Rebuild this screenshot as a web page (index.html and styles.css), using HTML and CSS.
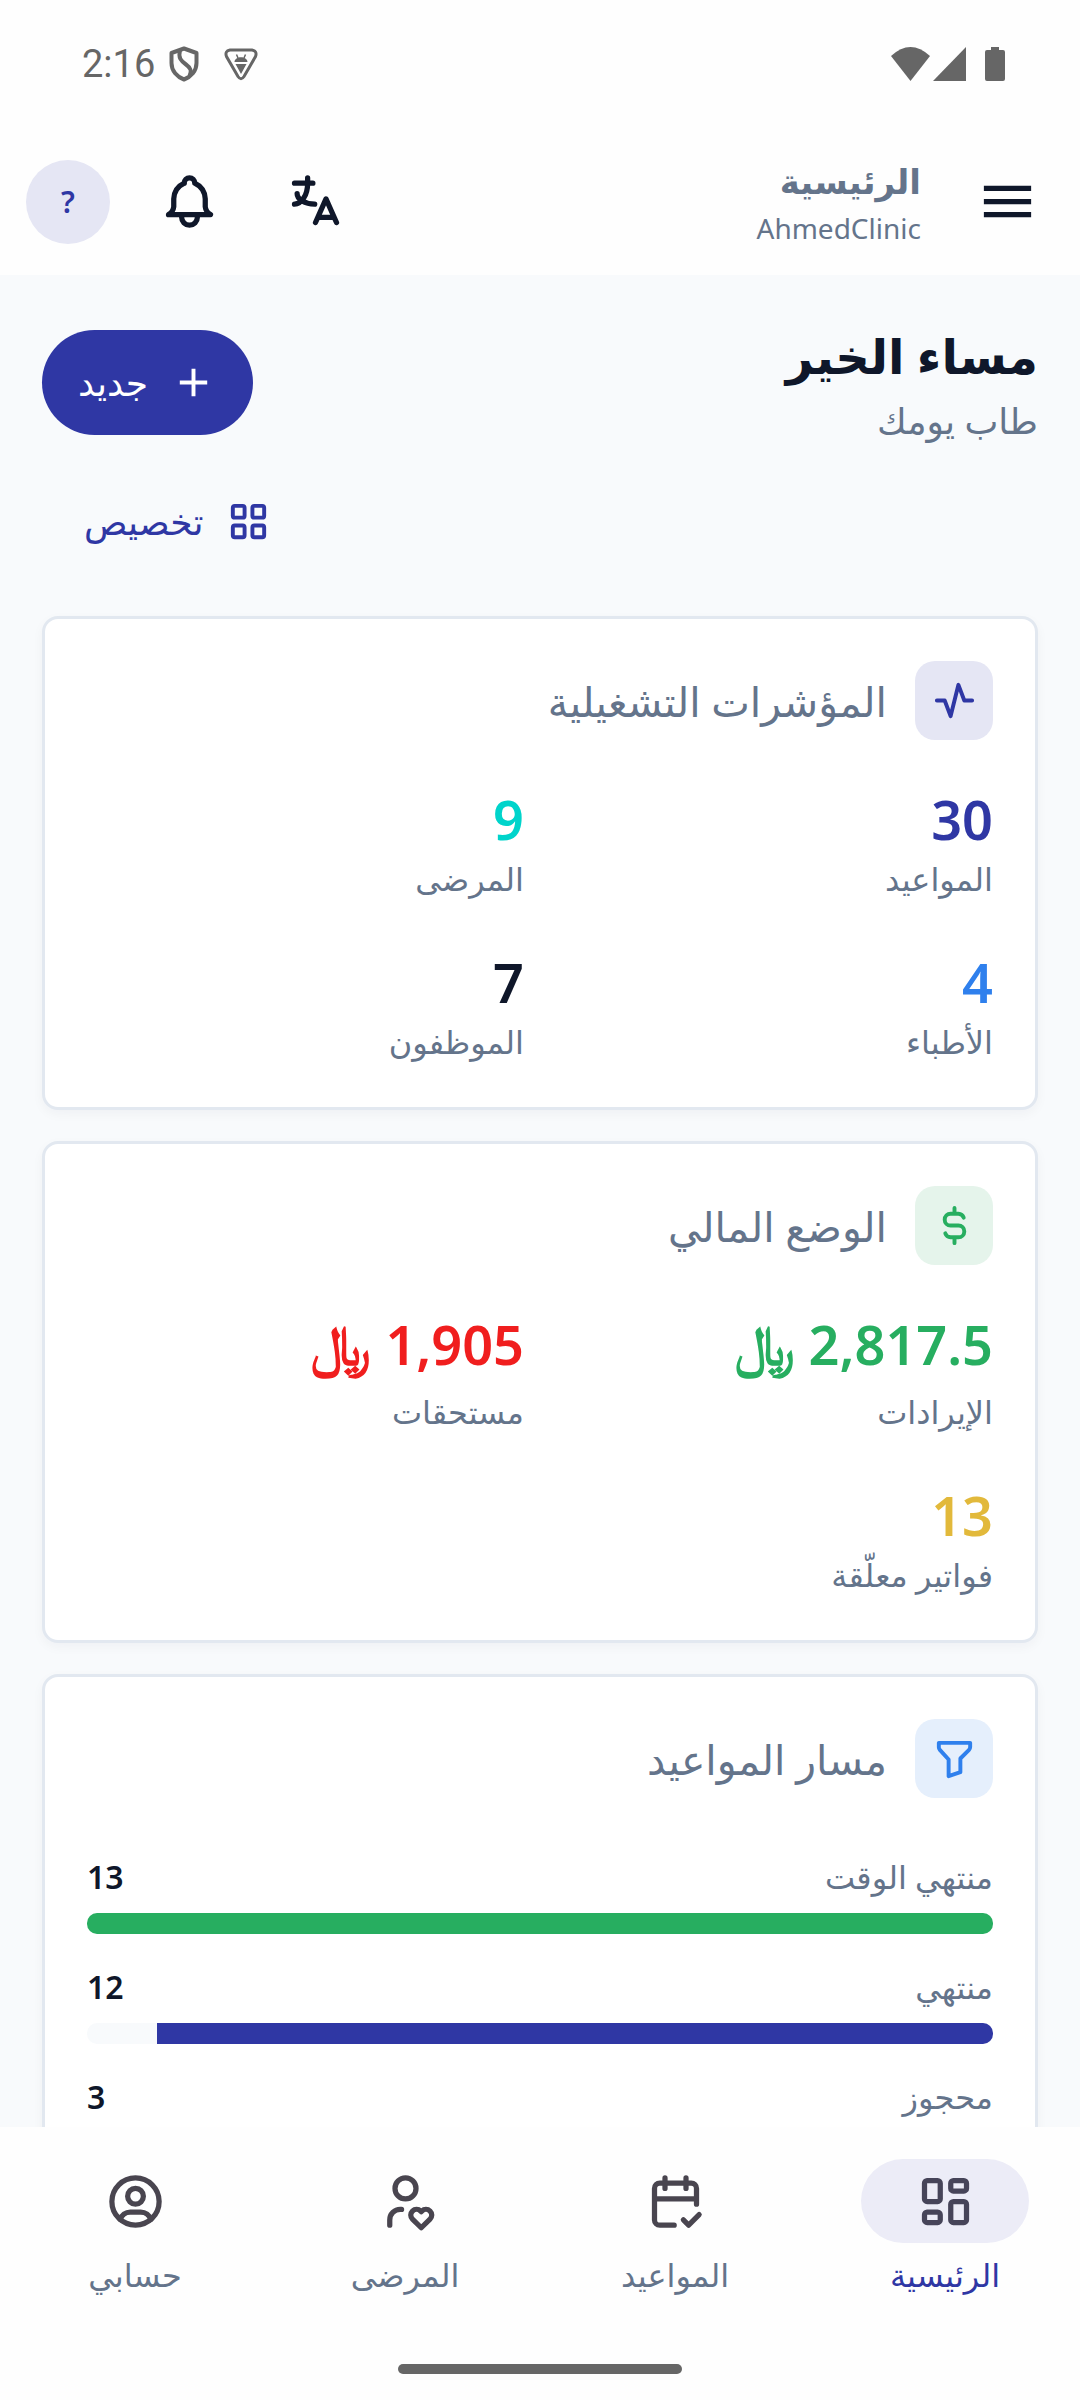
FILE: index.html
```html
<!DOCTYPE html>
<html lang="ar" dir="rtl">
<head>
    <meta charset="UTF-8">
    <meta name="viewport" content="width=device-width, initial-scale=1.0">
    <title>الرئيسية - AhmedClinic</title>
    <link rel="stylesheet" href="styles.css">
</head>
<body>
    <div class="status-bar" dir="ltr">
        <div class="status-left">
            <span class="clock">2:16</span>
            <svg class="status-shield" viewBox="0 0 30 36" fill="none" stroke="currentColor" stroke-width="4" stroke-linejoin="round">
                <path d="M15 2.500L27.500 7V17C27.500 25 22 31 15 33.500C8 31 2.500 25 2.500 17V7Z"/>
                <path d="M11 4C9 12 12 15 17 18.500C22 22 23 25 20.500 30"/>
            </svg>
            <svg class="status-debug" viewBox="0 0 34 33">
                <path d="M6 2H28Q33.500 3 31.500 8.500L20 28.500Q17 33 14 28.500L2.500 8.500Q0.500 3 6 2Z" fill="none" stroke="currentColor" stroke-width="3"/>
                <path d="M10.500 14C10.500 7.500 23.500 7.500 23.500 14ZM11.500 16H22.500L17 26Z" fill="currentColor"/>
                <path d="M12.500 6.500L14 10M21.500 6.500L20 10" stroke="currentColor" stroke-width="1.500"/>
            </svg>
        </div>
        <div class="status-right">
            <svg class="status-wifi" viewBox="0 0 39 34" fill="currentColor"><path d="M0 9Q19.500 -9 39 9L19.500 34Z"/></svg>
            <svg class="status-signal" viewBox="0 0 33 34" fill="currentColor"><path d="M33 0V34H0Z"/></svg>
            <svg class="status-battery" viewBox="0 0 20 34" fill="currentColor"><path d="M6 0H14V3H18Q20 3 20 5V32Q20 34 18 34H2Q0 34 0 32V5Q0 3 2 3H6Z"/></svg>
        </div>
    </div>

    <header class="app-bar">
        <button class="icon-button" aria-label="القائمة">
            <svg class="icon" viewBox="0 0 24 24" fill="currentColor"><path d="M3 18h18v-2H3v2zm0-5h18v-2H3v2zm0-7v2h18V6H3z"/></svg>
        </button>
        <div class="app-title">
            <span class="app-page">الرئيسية</span>
            <span class="app-clinic">AhmedClinic</span>
        </div>
        <button class="icon-button" aria-label="اللغة">
            <svg class="icon line" viewBox="0 0 24 24"><path d="M4 5h7M9 3v2c0 4.418 -2.239 8 -5 8M5 9c0 2.144 2.952 3.908 6.700 4M12 20l4 -9l4 9M19.100 18h-6.200"/></svg>
        </button>
        <button class="icon-button" aria-label="الإشعارات">
            <svg class="icon line" viewBox="0 0 24 24"><path d="M10 5a2 2 0 1 1 4 0a7 7 0 0 1 4 6v3a4 4 0 0 0 2 3h-16a4 4 0 0 0 2 -3v-3a7 7 0 0 1 4 -6M9 17v1a3 3 0 0 0 6 0v-1"/></svg>
        </button>
        <button class="avatar">?</button>
    </header>

    <main class="content">
        <section class="welcome">
            <div class="greeting">
                <h1>مساء الخير</h1>
                <p>طاب يومك</p>
            </div>
            <div class="actions">
                <button class="new-button">
                    <svg class="icon-small" viewBox="0 0 24 24" fill="currentColor"><path d="M19 13h-6v6h-2v-6H5v-2h6V5h2v6h6v2z"/></svg>
                    <span>جديد</span>
                </button>
                <button class="customize-button">
                    <svg class="icon-small line" viewBox="0 0 24 24"><rect x="4" y="4" width="6" height="6" rx="1"/><rect x="14" y="4" width="6" height="6" rx="1"/><rect x="4" y="14" width="6" height="6" rx="1"/><rect x="14" y="14" width="6" height="6" rx="1"/></svg>
                    <span>تخصيص</span>
                </button>
            </div>
        </section>

        <section class="card">
            <div class="card-head">
                <span class="tile tile-primary">
                    <svg class="icon-small line" viewBox="0 0 24 24"><path d="M3 12h4l3 8l4 -16l3 8h4"/></svg>
                </span>
                <h2>المؤشرات التشغيلية</h2>
            </div>
            <div class="stats">
                <div class="stat"><strong class="primary">30</strong><span>المواعيد</span></div>
                <div class="stat"><strong class="teal">9</strong><span>المرضى</span></div>
                <div class="stat"><strong class="blue">4</strong><span>الأطباء</span></div>
                <div class="stat"><strong class="dark">7</strong><span>الموظفون</span></div>
            </div>
        </section>

        <section class="card">
            <div class="card-head">
                <span class="tile tile-green">
                    <svg class="icon-small line" viewBox="0 0 24 24"><path d="M16.700 8a3 3 0 0 0 -2.700 -2h-4a3 3 0 0 0 0 6h4a3 3 0 0 1 0 6h-4a3 3 0 0 1 -2.700 -2M12 3v3m0 12v3"/></svg>
                </span>
                <h2>الوضع المالي</h2>
            </div>
            <div class="stats">
                <div class="stat money"><strong class="green">2,817.5 ﷼</strong><span>الإيرادات</span></div>
                <div class="stat money"><strong class="red">1,905 ﷼</strong><span>مستحقات</span></div>
                <div class="stat"><strong class="yellow">13</strong><span>فواتير معلّقة</span></div>
            </div>
        </section>

        <section class="card">
            <div class="card-head">
                <span class="tile tile-blue">
                    <svg class="icon-small line" viewBox="0 0 24 24"><path d="M4 4h16v2.172a2 2 0 0 1 -.586 1.414l-4.414 4.414v7l-6 2v-8.500l-4.480 -4.928a2 2 0 0 1 -.520 -1.345v-2.227z"/></svg>
                </span>
                <h2>مسار المواعيد</h2>
            </div>
            <div class="funnel">
                <div class="funnel-row">
                    <div class="funnel-label"><span>منتهي الوقت</span><b>13</b></div>
                    <div class="track"><div class="fill fill-green" style="width: 100%"></div></div>
                </div>
                <div class="funnel-row">
                    <div class="funnel-label"><span>منتهي</span><b>12</b></div>
                    <div class="track"><div class="fill fill-primary" style="width: 92.300%"></div></div>
                </div>
                <div class="funnel-row">
                    <div class="funnel-label"><span>محجوز</span><b>3</b></div>
                    <div class="track"><div class="fill fill-primary" style="width: 23%"></div></div>
                </div>
            </div>
        </section>
    </main>

    <footer class="bottom">
        <nav class="bottom-nav">
            <a href="#" class="nav-item active">
                <span class="nav-icon"><svg class="icon line" viewBox="0 0 24 24"><path d="M5 4h4a1 1 0 0 1 1 1v6a1 1 0 0 1 -1 1h-4a1 1 0 0 1 -1 -1v-6a1 1 0 0 1 1 -1M5 16h4a1 1 0 0 1 1 1v2a1 1 0 0 1 -1 1h-4a1 1 0 0 1 -1 -1v-2a1 1 0 0 1 1 -1M15 12h4a1 1 0 0 1 1 1v6a1 1 0 0 1 -1 1h-4a1 1 0 0 1 -1 -1v-6a1 1 0 0 1 1 -1M15 4h4a1 1 0 0 1 1 1v2a1 1 0 0 1 -1 1h-4a1 1 0 0 1 -1 -1v-2a1 1 0 0 1 1 -1"/></svg></span>
                <span>الرئيسية</span>
            </a>
            <a href="#" class="nav-item">
                <span class="nav-icon"><svg class="icon line" viewBox="0 0 24 24"><path d="M11.500 21h-5.500a2 2 0 0 1 -2 -2v-12a2 2 0 0 1 2 -2h12a2 2 0 0 1 2 2v6M16 3v4M8 3v4M4 11h16M15 19l2 2l4 -4"/></svg></span>
                <span>المواعيد</span>
            </a>
            <a href="#" class="nav-item">
                <span class="nav-icon"><svg class="icon line" viewBox="0 0 24 24"><path d="M8 7a4 4 0 1 0 8 0a4 4 0 0 0 -8 0M6 21v-2a4 4 0 0 1 4 -4h.500M18 22l3.350 -3.284a2.143 2.143 0 0 0 .005 -3.071a2.242 2.242 0 0 0 -3.129 -.006l-.224 .220l-.223 -.220a2.242 2.242 0 0 0 -3.128 -.006a2.143 2.143 0 0 0 -.006 3.071l3.355 3.296z"/></svg></span>
                <span>المرضى</span>
            </a>
            <a href="#" class="nav-item">
                <span class="nav-icon"><svg class="icon line" viewBox="0 0 24 24"><circle cx="12" cy="12" r="9"/><circle cx="12" cy="10" r="3"/><path d="M6.168 18.849a4 4 0 0 1 3.832 -2.849h4a4 4 0 0 1 3.834 2.855"/></svg></span>
                <span>حسابي</span>
            </a>
        </nav>
        <div class="home-indicator"></div>
    </footer>
</body>
</html>
```
FILE: styles.css
```css
* {
    box-sizing: border-box;
}
body {
    margin: 0;
    height: 100vh;
    display: flex;
    flex-direction: column;
    overflow: hidden;
    background-color: #fefefe;
    color: #0f172a;
    font-family: "Noto Sans", "DejaVu Sans", sans-serif;
}
button {
    border: none;
    padding: 0;
    background: none;
    color: inherit;
    font-family: inherit;
    cursor: pointer;
}
h1, h2, p {
    margin: 0;
}
svg {
    display: block;
    flex: none;
}
.icon {
    width: 63px;
    height: 63px;
}
.icon-small {
    width: 47px;
    height: 47px;
}
.line {
    fill: none;
    stroke: currentColor;
    stroke-width: 2;
    stroke-linecap: round;
    stroke-linejoin: round;
}

/* status bar */
.status-bar {
    display: flex;
    justify-content: space-between;
    align-items: center;
    height: 128px;
    padding: 0 75px 0 82px;
    color: #666;
}
.status-left, .status-right {
    display: flex;
    align-items: center;
}
.clock {
    font-family: Roboto, sans-serif;
    font-size: 38px;
    margin-right: 14px;
}
.status-shield {
    width: 30px;
    height: 36px;
    margin-right: 25px;
}
.status-debug {
    width: 34px;
    height: 33px;
}
.status-wifi {
    width: 39px;
    height: 34px;
    margin-right: 3px;
}
.status-signal {
    width: 33px;
    height: 34px;
    margin-right: 19px;
}
.status-battery {
    width: 20px;
    height: 34px;
}

/* app bar */
.app-bar {
    display: flex;
    align-items: center;
    height: 147px;
    padding: 0 10px 0 26px;
}
.icon-button {
    display: flex;
    align-items: center;
    justify-content: center;
    width: 126px;
    height: 126px;
}
.app-title {
    flex: 1;
    display: flex;
    flex-direction: column;
    padding-right: 23px;
    color: #64748b;
}
.app-page {
    font-size: 34px;
    font-weight: 600;
    line-height: 52px;
}
.app-clinic {
    font-size: 28px;
    line-height: 42px;
}
.avatar {
    width: 84px;
    height: 84px;
    margin-right: 16px;
    border-radius: 50%;
    background-color: #e5e6f4;
    color: #2f37a4;
    font-size: 30px;
    font-weight: 600;
}

/* content */
.content {
    flex: 1;
    min-height: 0;
    overflow: hidden;
    padding: 55px 42px 0;
    background-color: #f8fafc;
}
.welcome {
    display: flex;
    justify-content: space-between;
    margin-bottom: 42px;
}
.greeting h1 {
    font-size: 48px;
    font-weight: 600;
    line-height: 52px;
}
.greeting p {
    font-size: 36px;
    line-height: 78px;
    color: #64748b;
}
.actions {
    display: flex;
    flex-direction: column;
    align-items: flex-end;
    gap: 34px;
}
.new-button, .customize-button {
    display: flex;
    align-items: center;
    justify-content: center;
    height: 105px;
    gap: 22px;
    font-size: 36px;
}
.new-button {
    padding: 0 36px;
    border-radius: 53px;
    background-color: #2f37a4;
    color: #fff;
}
.customize-button {
    padding: 0 42px;
    color: #2f37a4;
}

.card {
    margin-bottom: 31px;
    padding: 42px;
    border: 3px solid #e2e8f0;
    border-radius: 16px;
    background-color: #fff;
    box-shadow: 0 4px 12px rgba(15, 23, 42, 0.04);
}
.card-head {
    display: flex;
    align-items: center;
    gap: 28px;
    margin-bottom: 42px;
}
.card-head h2 {
    font-size: 41px;
    font-weight: 400;
    line-height: 60px;
    color: #64748b;
}
.tile {
    display: flex;
    align-items: center;
    justify-content: center;
    width: 78px;
    height: 79px;
    border-radius: 20px;
}
.tile-primary {
    background-color: #e5e6f4;
    color: #2f37a4;
}
.tile-green {
    background-color: #e5f4eb;
    color: #27ae60;
}
.tile-blue {
    background-color: #e5effc;
    color: #2f80ed;
}
.stats {
    display: grid;
    grid-template-columns: 1fr 1fr;
    gap: 43px 32px;
}
.stat {
    display: flex;
    flex-direction: column;
}
.stat strong {
    font-size: 54px;
    font-weight: 600;
    line-height: 74px;
}
.stat span {
    font-size: 32px;
    line-height: 46px;
    color: #64748b;
}
.money strong {
    padding-bottom: 8px;
}
.primary { color: #2f37a4; }
.teal { color: #00d4cb; }
.blue { color: #2f80ed; }
.dark { color: #0f172a; }
.green { color: #27ae60; }
.red { color: #f01e1e; }
.yellow { color: #e2b93b; }

.funnel {
    display: flex;
    flex-direction: column;
    gap: 29px;
    padding-top: 13px;
}
.funnel-label {
    display: flex;
    justify-content: space-between;
    margin-bottom: 12px;
    font-size: 32px;
    line-height: 48px;
    color: #64748b;
}
.funnel-label b {
    font-weight: 600;
    color: #0f172a;
}
.track {
    height: 21px;
    border-radius: 10px;
    background-color: #f8fafc;
    overflow: hidden;
}
.fill {
    height: 100%;
}
.fill-green { background-color: #27ae60; }
.fill-primary { background-color: #2f37a4; }

/* bottom navigation */
.bottom {
    padding: 32px 0 26px;
}
.bottom-nav {
    display: flex;
    margin-bottom: 70px;
}
.nav-item {
    flex: 1;
    display: flex;
    flex-direction: column;
    align-items: center;
    gap: 12px;
    color: #64748b;
    font-size: 32px;
    font-weight: 500;
    line-height: 39px;
    text-decoration: none;
}
.nav-icon {
    display: flex;
    align-items: center;
    justify-content: center;
    width: 168px;
    height: 84px;
    border-radius: 42px;
    color: #49454f;
}
.active {
    color: #2f37a4;
}
.active .nav-icon {
    background-color: #ececf7;
    color: #464459;
}
.home-indicator {
    width: 284px;
    height: 10px;
    margin: 0 auto;
    border-radius: 5px;
    background-color: #666;
}
```
